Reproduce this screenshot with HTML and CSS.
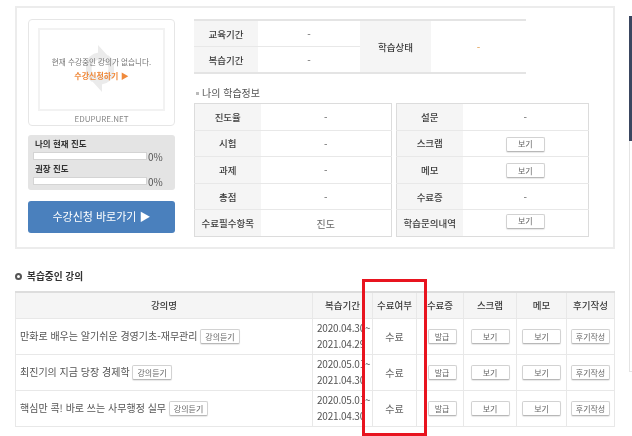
FILE: index.html
```html
<!DOCTYPE html>
<html lang="ko">
<head>
<meta charset="utf-8">
<title>나의 학습정보</title>
<link rel="stylesheet" href="styles.css">
</head>
<body>
<div class="page">
  <main class="content">
    <section class="panel">
      <aside class="side">
        <div class="thumb">
          <div class="thumb-inner">
            <svg class="thumb-arrows" viewBox="0 0 28 47" aria-hidden="true">
              <path d="M8 34 A12.5 12.5 0 0 1 13 11" fill="none" stroke="#ebebeb" stroke-width="7"/>
              <path d="M20 13 A12.5 12.5 0 0 1 15 36" fill="none" stroke="#ebebeb" stroke-width="7"/>
              <path d="M12 0 L22 11 L12 20 Z" fill="#ebebeb"/>
              <path d="M16 47 L6 36 L16 27 Z" fill="#ebebeb"/>
            </svg>
            <p class="thumb-msg">현재 수강중인 강의가 없습니다.</p>
            <p class="thumb-link">수강신청하기 ▶</p>
          </div>
          <div class="thumb-cap">EDUPURE.NET</div>
        </div>
        <div class="progress">
          <div class="progress-label">나의 현재 진도</div>
          <div class="progress-row"><span class="bar"></span><span class="pct">0%</span></div>
          <div class="progress-label">권장 진도</div>
          <div class="progress-row"><span class="bar"></span><span class="pct">0%</span></div>
        </div>
        <a class="cta">수강신청 바로가기 ▶</a>
      </aside>
      <div class="info">
        <table class="tbl period">
          <colgroup><col class="p1"><col class="p2"><col class="p3"><col class="p4"></colgroup>
          <tr><th>교육기간</th><td>-</td><th rowspan="2">학습상태</th><td rowspan="2" class="accent">-</td></tr>
          <tr><th>복습기간</th><td>-</td></tr>
        </table>
        <h3 class="sub">나의 학습정보</h3>
        <div class="pair">
          <table class="tbl boxed left">
            <colgroup><col class="l1"><col></colgroup>
            <tr><th>진도율</th><td>-</td></tr>
            <tr><th>시험</th><td>-</td></tr>
            <tr><th>과제</th><td>-</td></tr>
            <tr><th>총점</th><td>-</td></tr>
            <tr><th>수료필수항목</th><td>진도</td></tr>
          </table>
          <table class="tbl boxed right">
            <colgroup><col class="l1"><col></colgroup>
            <tr><th>설문</th><td>-</td></tr>
            <tr><th>스크랩</th><td><button class="btn wide">보기</button></td></tr>
            <tr><th>메모</th><td><button class="btn wide">보기</button></td></tr>
            <tr><th>수료증</th><td>-</td></tr>
            <tr><th>학습문의내역</th><td><button class="btn wide raised">보기</button></td></tr>
          </table>
        </div>
      </div>
    </section>
    <h2 class="heading"><span class="ring"></span>복습중인 강의</h2>
    <table class="tbl review">
      <colgroup><col class="r1"><col class="r2"><col class="r3"><col class="r4"><col class="r5"><col class="r6"><col class="r7"></colgroup>
      <tr class="head"><th>강의명</th><th>복습기간</th><th>수료여부</th><th>수료증</th><th>스크랩</th><th>메모</th><th>후기작성</th></tr>
      <tr>
        <td class="name">만화로 배우는 알기쉬운 경영기초-재무관리 <button class="btn">강의듣기</button></td>
        <td class="date">2020.04.30~<br>2021.04.29</td><td>수료</td>
        <td><button class="btn small">발급</button></td><td><button class="btn wide">보기</button></td><td><button class="btn wide">보기</button></td><td><button class="btn">후기작성</button></td>
      </tr>
      <tr>
        <td class="name">최진기의 지금 당장 경제학 <button class="btn">강의듣기</button></td>
        <td class="date">2020.05.01~<br>2021.04.30</td><td>수료</td>
        <td><button class="btn small">발급</button></td><td><button class="btn wide">보기</button></td><td><button class="btn wide">보기</button></td><td><button class="btn">후기작성</button></td>
      </tr>
      <tr>
        <td class="name">핵심만 콕! 바로 쓰는 사무행정 실무 <button class="btn">강의듣기</button></td>
        <td class="date">2020.05.01~<br>2021.04.30</td><td>수료</td>
        <td><button class="btn small">발급</button></td><td><button class="btn wide">보기</button></td><td><button class="btn wide">보기</button></td><td><button class="btn">후기작성</button></td>
      </tr>
    </table>
  </main>
  <div class="rail"><div class="rail-thumb"></div></div>
  <div class="highlight"></div>
</div>
</body>
</html>
```
FILE: styles.css
```css
* { box-sizing: border-box; }
html, body { margin: 0; padding: 0; background: #fff; }
body { width: 632px; height: 436px; overflow: hidden; font-family: "Noto Sans CJK KR", "Liberation Sans", sans-serif; font-size: 10px; color: #444; }
.page { position: relative; width: 632px; height: 436px; overflow: hidden; filter: blur(0.45px); }
.content { width: 600px; margin-left: 15px; padding-top: 6px; }
p { margin: 0; }
.panel { display: flex; gap: 19px; height: 243px; padding: 11px 0 0 11px; border: 2px solid #ececec; }
.side { width: 147px; flex: none; }
.thumb { height: 107px; padding: 8px 9px 0; border: 1px solid #e6e6e6; border-radius: 4px; }
.thumb-inner { position: relative; height: 83px; border: 2px solid #f2f2f2; text-align: center; padding-top: 26px; }
.thumb-arrows { position: absolute; left: 46px; top: 15px; width: 28px; height: 47px; }
.thumb-msg, .thumb-link { position: relative; font-size: 7.6px; line-height: 12px; white-space: nowrap; }
.thumb-msg { color: #777; }
.thumb-link { margin-top: 2px; font-size: 8px; color: #f08a3c; font-weight: 700; }
.thumb-cap { font-size: 8px; line-height: 16px; text-align: center; color: #888; }
.progress { height: 55px; margin-top: 9px; padding: 3px 6px 0; background: #e4e4e4; border-radius: 3px; }
.progress-label { font-size: 8.5px; line-height: 11px; font-weight: 700; color: #333; padding-left: 1px; }
.progress-row { display: flex; align-items: center; height: 14px; margin-left: -1px; }
.bar { width: 114px; height: 8px; background: #fff; border: 1px solid #d4d4d4; }
.pct { font-size: 10px; color: #555; margin-left: 1px; }
.cta { display: block; height: 32px; margin-top: 11px; background: #4a80bd; border-radius: 3px; color: #fff; font-size: 11px; line-height: 31px; text-align: center; }
.info { flex: 1; min-width: 0; }
.tbl { border-collapse: collapse; table-layout: fixed; }
.tbl th { background: #f5f5f5; font-size: 9.5px; font-weight: 500; color: #3c3c3c; padding: 0; text-align: center; white-space: nowrap; }
.tbl td { padding: 0; text-align: center; color: #666; }
.tbl tr + tr th, .tbl tr + tr td { border-top: 1px solid #e8e8e8; }
.period { width: 332px; border-top: 2px solid #e4e4e4; border-bottom: 2px solid #e4e4e4; }
.period tr { height: 26.5px; }
.p1 { width: 64px; } .p2 { width: 102px; } .p3 { width: 71px; }
.accent { color: #e09a4a !important; }
.sub { margin: 11px 0 3px; font-size: 10px; line-height: 15px; font-weight: 400; color: #555; }
.sub::before { content: ""; display: inline-block; width: 3px; height: 3px; margin: 0 3px 2px 2px; background: #bbb; }
.pair { display: flex; gap: 4px; }
.boxed { height: 134px; border: 1px solid #dcdcdc; }
.boxed tr { height: 26.6px; }
.left { width: 198px; }
.right { width: 193px; }
.l1 { width: 66px; }
.btn { display: inline-block; height: 15px; padding: 0 4px; font: inherit; font-size: 8px; line-height: 12px; color: #666; background: #fff; border: 1px solid #d2d2d2; border-bottom-color: #b8b8b8; border-radius: 2px; vertical-align: middle; box-shadow: 0 1px 1px #e8e8e8; }
.wide { width: 39px; }
.small { width: 29px; margin-left: 4px; }
.raised { margin-bottom: 4px; }
.heading { display: flex; align-items: center; gap: 5px; margin: 19px 0 0; height: 16px; font-size: 9.7px; font-weight: 700; color: #333; }
.ring { width: 7px; height: 7px; border: 2px solid #555; border-radius: 50%; }
.review { width: 600px; margin-top: 7px; border-top: 2px solid #ddd; border-left: 1px solid #e8e8e8; border-right: 1px solid #e8e8e8; border-bottom: 1px solid #e8e8e8; }
.review th, .review td { border-left: 1px solid #e8e8e8; }
.review .head { height: 26px; }
.review tr { height: 36px; }
.review .name { text-align: left; padding-left: 4px; font-size: 10px; color: #555; white-space: nowrap; }
.review .date { text-align: left; padding-left: 4px; font-size: 10px; line-height: 16px; letter-spacing: -0.2px; color: #555; white-space: nowrap; overflow: visible; }
.r1 { width: 297px; } .r2 { width: 60px; } .r3 { width: 44px; } .r4 { width: 47px; } .r5 { width: 53px; } .r6 { width: 50px; }
.rail { position: absolute; left: 629px; top: 141px; width: 3px; height: 231px; border-left: 1px solid #e4e4e4; border-bottom: 1px solid #e4e4e4; }
.rail-thumb { position: absolute; left: -1px; top: -125px; width: 3px; height: 125px; background: #3a4660; }
.highlight { position: absolute; left: 362px; top: 279px; width: 65px; height: 157px; border: 3px solid #e8141f; }
```
